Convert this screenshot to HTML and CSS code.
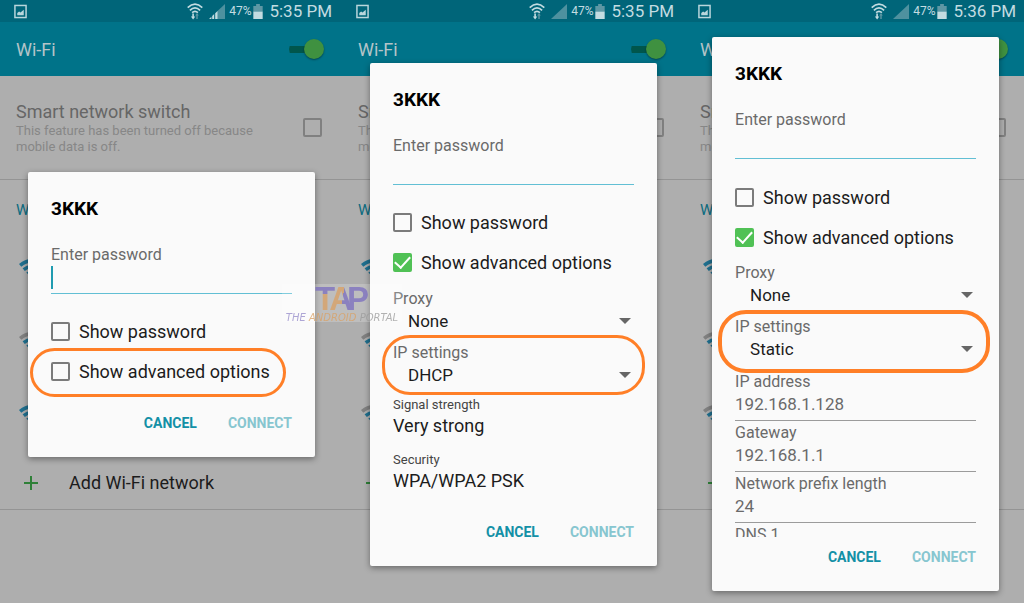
FILE: index.html
```html
<!DOCTYPE html>
<html lang="en">

<head>
    <meta charset="UTF-8">
    <meta name="viewport" content="width=device-width, initial-scale=1.0">
    <title>Wi-Fi advanced options</title>
    <link rel="stylesheet" href="styles.css">
</head>

<body>
    <!-- shared icons -->
    <svg class="defs" width="0" height="0" aria-hidden="true">
        <symbol id="i-image" viewBox="0 0 14 15">
            <rect x="1" y="1" width="12" height="13" fill="none" stroke="#b9d6dc" stroke-width="1.6" />
            <path d="M3.5 11.5V9l2-1.5L7 8.5l3.5-3v6z" fill="#b9d6dc" />
        </symbol>
        <symbol id="i-wifi-status" viewBox="0 0 16 17">
            <g fill="none" stroke="#c3dce1" stroke-width="1.7">
                <path d="M.7 4.6Q8-2.2 15.3 4.6" />
                <path d="M2.9 7.3Q8 2.3 13.1 7.3" />
                <path d="M5.1 9.7Q8 7 10.9 9.7" />
            </g>
            <path d="M5.3 10.5h1.6v3h1.4l-2.2 3-2.2-3h1.4z" fill="#c3dce1" />
            <path d="M9.3 16v-3.5H8.2L10 10l1.8 2.5h-1.1V16z" fill="#5e97a4" />
        </symbol>
        <symbol id="i-signal" viewBox="0 0 16 15">
            <path d="M0 15L16 0v15z" fill="#4e919f" />
        </symbol>
        <symbol id="i-signal-bars" viewBox="0 0 16 15">
            <path d="M8.5 7L16 0v15H8.5z" fill="#4e919f" />
            <path d="M0 15l2.4-2.2V15zM3.2 15v-3l2-1.9V15zM6.2 15V9.2L8.6 7v8z" fill="#c3dce1" />
        </symbol>
        <symbol id="i-battery" viewBox="0 0 10 16">
            <path d="M3 0h4v2h3v6H0V2h3z" fill="#5e97a4" />
            <path d="M0 8h10v8H0z" fill="#c3dce1" />
        </symbol>
        <symbol id="i-wifi" viewBox="0 0 24 18">
            <path d="M0 5Q12-5 24 5l-2.3 2.8Q12-.5 2.3 7.8z" fill="#1f6f8e" />
            <path d="M3.6 9.3Q12 2.5 20.4 9.3l-2.2 2.6Q12 7 5.8 11.9z" fill="#1f6f8e" />
            <path d="M7.3 13.5q4.7-3.7 9.4 0L12 18z" fill="#1f6f8e" />
        </symbol>
        <symbol id="i-wifi-weak" viewBox="0 0 24 18">
            <path d="M0 5Q12-5 24 5l-2.3 2.8Q12-.5 2.3 7.8z" fill="#808080" />
            <path d="M3.6 9.3Q12 2.5 20.4 9.3l-2.2 2.6Q12 7 5.8 11.9z" fill="#1f6f8e" />
            <path d="M7.3 13.5q4.7-3.7 9.4 0L12 18z" fill="#1f6f8e" />
        </symbol>
        <symbol id="i-plus" viewBox="0 0 14 14">
            <path d="M7 0v14M0 7h14" stroke="#2f8038" stroke-width="2" />
        </symbol>
    </svg>

    <main class="phones">
        <!-- default dialog -->
        <section class="phone">
            <div class="status-bar">
                <svg class="icon-image"><use href="#i-image" /></svg>
                <svg class="icon-wifi-status"><use href="#i-wifi-status" /></svg>
                <svg class="icon-signal"><use href="#i-signal-bars" /></svg>
                <span class="percent">47%</span>
                <svg class="icon-battery"><use href="#i-battery" /></svg>
                <span class="time">5:35 PM</span>
            </div>
            <header class="app-bar">
                <h1>Wi-Fi</h1>
                <input type="checkbox" class="switch" aria-label="Wi-Fi" checked>
            </header>
            <div class="smart">
                <label for="smart1">
                    <span class="smart-title">Smart network switch</span>
                    <span class="smart-text">This feature has been turned off because mobile data is off.</span>
                </label>
                <input type="checkbox" id="smart1" class="check check-dim">
            </div>
            <div class="networks">
                <h2>Wi-Fi networks</h2>
                <div class="network"><svg><use href="#i-wifi" /></svg></div>
                <div class="network"><svg><use href="#i-wifi-weak" /></svg></div>
                <div class="network"><svg><use href="#i-wifi" /></svg></div>
                <button class="add"><svg><use href="#i-plus" /></svg>Add Wi-Fi network</button>
            </div>

            <div class="overlay">
                <form class="dialog">
                    <h3>3KKK</h3>
                    <div class="dialog-body">
                        <label class="label" for="pass1">Enter password</label>
                        <div class="password focused"><input type="password" id="pass1"></div>
                        <div class="option">
                            <input type="checkbox" id="show1" class="check">
                            <label for="show1">Show password</label>
                        </div>
                        <div class="option mark mark-row">
                            <input type="checkbox" id="adv1" class="check">
                            <label for="adv1">Show advanced options</label>
                        </div>
                    </div>
                    <div class="actions">
                        <button type="button">Cancel</button>
                        <button type="button" disabled>Connect</button>
                    </div>
                </form>
            </div>
        </section>

        <!-- advanced options, DHCP -->
        <section class="phone">
            <div class="status-bar">
                <svg class="icon-image"><use href="#i-image" /></svg>
                <svg class="icon-wifi-status"><use href="#i-wifi-status" /></svg>
                <svg class="icon-signal"><use href="#i-signal" /></svg>
                <span class="percent">47%</span>
                <svg class="icon-battery"><use href="#i-battery" /></svg>
                <span class="time">5:35 PM</span>
            </div>
            <header class="app-bar">
                <h1>Wi-Fi</h1>
                <input type="checkbox" class="switch" aria-label="Wi-Fi" checked>
            </header>
            <div class="smart">
                <label for="smart2">
                    <span class="smart-title">Smart network switch</span>
                    <span class="smart-text">This feature has been turned off because mobile data is off.</span>
                </label>
                <input type="checkbox" id="smart2" class="check check-dim">
            </div>
            <div class="networks">
                <h2>Wi-Fi networks</h2>
                <div class="network"><svg><use href="#i-wifi" /></svg></div>
                <div class="network"><svg><use href="#i-wifi-weak" /></svg></div>
                <div class="network"><svg><use href="#i-wifi-weak" /></svg></div>
                <button class="add"><svg><use href="#i-plus" /></svg>Add Wi-Fi network</button>
            </div>

            <div class="overlay">
                <form class="dialog">
                    <h3>3KKK</h3>
                    <div class="dialog-body">
                        <label class="label" for="pass2">Enter password</label>
                        <div class="password"><input type="password" id="pass2"></div>
                        <div class="option">
                            <input type="checkbox" id="show2" class="check">
                            <label for="show2">Show password</label>
                        </div>
                        <div class="option">
                            <input type="checkbox" id="adv2" class="check" checked>
                            <label for="adv2">Show advanced options</label>
                        </div>
                        <div class="field">
                            <label class="label" for="proxy2">Proxy</label>
                            <div class="select"><select id="proxy2"><option>None</option></select></div>
                        </div>
                        <div class="field mark mark-dhcp">
                            <label class="label" for="ip2">IP settings</label>
                            <div class="select"><select id="ip2"><option>DHCP</option><option>Static</option></select></div>
                        </div>
                        <dl class="info">
                            <dt>Signal strength</dt>
                            <dd>Very strong</dd>
                            <dt>Security</dt>
                            <dd>WPA/WPA2 PSK</dd>
                        </dl>
                    </div>
                    <div class="actions">
                        <button type="button">Cancel</button>
                        <button type="button" disabled>Connect</button>
                    </div>
                </form>
            </div>
        </section>

        <!-- advanced options, static IP -->
        <section class="phone">
            <div class="status-bar">
                <svg class="icon-image"><use href="#i-image" /></svg>
                <svg class="icon-wifi-status"><use href="#i-wifi-status" /></svg>
                <svg class="icon-signal"><use href="#i-signal" /></svg>
                <span class="percent">47%</span>
                <svg class="icon-battery"><use href="#i-battery" /></svg>
                <span class="time">5:36 PM</span>
            </div>
            <header class="app-bar">
                <h1>Wi-Fi</h1>
                <input type="checkbox" class="switch" aria-label="Wi-Fi" checked>
            </header>
            <div class="smart">
                <label for="smart3">
                    <span class="smart-title">Smart network switch</span>
                    <span class="smart-text">This feature has been turned off because mobile data is off.</span>
                </label>
                <input type="checkbox" id="smart3" class="check check-dim">
            </div>
            <div class="networks">
                <h2>Wi-Fi networks</h2>
                <div class="network"><svg><use href="#i-wifi" /></svg></div>
                <div class="network"><svg><use href="#i-wifi-weak" /></svg></div>
                <div class="network"><svg><use href="#i-wifi-weak" /></svg></div>
                <button class="add"><svg><use href="#i-plus" /></svg>Add Wi-Fi network</button>
            </div>

            <div class="overlay">
                <form class="dialog">
                    <h3>3KKK</h3>
                    <div class="dialog-body">
                        <label class="label" for="pass3">Enter password</label>
                        <div class="password"><input type="password" id="pass3"></div>
                        <div class="option">
                            <input type="checkbox" id="show3" class="check">
                            <label for="show3">Show password</label>
                        </div>
                        <div class="option">
                            <input type="checkbox" id="adv3" class="check" checked>
                            <label for="adv3">Show advanced options</label>
                        </div>
                        <div class="field">
                            <label class="label" for="proxy3">Proxy</label>
                            <div class="select"><select id="proxy3"><option>None</option></select></div>
                        </div>
                        <div class="field mark mark-static">
                            <label class="label" for="ip3">IP settings</label>
                            <div class="select"><select id="ip3"><option>Static</option><option>DHCP</option></select></div>
                        </div>
                        <div class="static">
                            <label class="label" for="address">IP address</label>
                            <input type="text" id="address" value="192.168.1.128">
                            <label class="label" for="gateway">Gateway</label>
                            <input type="text" id="gateway" value="192.168.1.1">
                            <label class="label" for="prefix">Network prefix length</label>
                            <input type="text" id="prefix" value="24">
                            <label class="label" for="dns">DNS 1</label>
                            <input type="text" id="dns">
                        </div>
                    </div>
                    <div class="actions">
                        <button type="button">Cancel</button>
                        <button type="button" disabled>Connect</button>
                    </div>
                </form>
            </div>
        </section>
    </main>

    <div class="watermark">
        <div class="logo"><span class="t">T</span><span class="a">A</span><span class="p">P</span></div>
        <div class="tagline">THE <span class="android">ANDROID</span> <span class="portal">PORTAL</span></div>
    </div>
</body>

</html>
```

FILE: styles.css
```css
* {
    box-sizing: border-box;
}

body {
    margin: 0;
    overflow: hidden;
    background: #aeaeae;
    color: #1c1c1c;
    font-family: Roboto, "Liberation Sans", sans-serif;
    font-size: 18px;
}

h1,
h2,
h3,
dl,
dd {
    margin: 0;
    font-weight: 400;
}

input,
select,
button {
    margin: 0;
    padding: 0;
    border: none;
    border-radius: 0;
    background: none;
    color: inherit;
    font: inherit;
    outline: none;
    appearance: none;
}

svg {
    display: block;
    flex: none;
}

.defs {
    position: absolute;
}

.phones {
    display: grid;
    grid-template-columns: repeat(3, 33.4%);
    height: 100vh;
}

.phone {
    position: relative;
    overflow: hidden;
    background: #aeaeae;
}

/* status bar */
.status-bar {
    display: flex;
    align-items: center;
    height: 22px;
    padding: 0 10px 0 14px;
    background: #006579;
    color: #c3dce1;
}

.icon-image {
    width: 13px;
    height: 15px;
    margin-right: auto;
}

.icon-wifi-status {
    width: 16px;
    height: 17px;
}

.icon-signal {
    width: 16px;
    height: 15px;
    margin: 0 4px 0 6px;
}

.percent {
    font-size: 12px;
}

.icon-battery {
    width: 10px;
    height: 15px;
    margin: 0 6px 0 2px;
}

.time {
    font-size: 17px;
}

/* page under the dialog */
.app-bar {
    display: flex;
    align-items: center;
    justify-content: space-between;
    height: 54px;
    padding: 0 18px 0 16px;
    background: #007389;
    color: #b4c4c8;
}

.app-bar h1 {
    font-size: 18px;
}

.switch {
    display: flex;
    align-items: center;
    justify-content: flex-end;
    width: 35px;
    height: 20px;
    background: linear-gradient(#00564c, #00564c) 0 50% / 26px 7px no-repeat;
    border-radius: 10px;
}

.switch::after {
    content: "";
    width: 20px;
    height: 20px;
    border-radius: 50%;
    background: #3f9140;
    box-shadow: 0 1px 2px rgba(0, 0, 0, 0.4);
}

.smart {
    display: flex;
    align-items: center;
    justify-content: space-between;
    height: 104px;
    padding: 0 20px 0 16px;
    border-bottom: 1px solid #949494;
}

.smart label {
    width: 250px;
}

.smart-title {
    display: block;
    color: #666;
    line-height: 22px;
}

.smart-text {
    display: block;
    color: #878787;
    font-size: 13px;
    line-height: 16px;
}

.networks {
    border-bottom: 1px solid #949494;
}

.networks h2 {
    height: 51px;
    padding: 20px 16px 0;
    color: #0b6b80;
    font-size: 15px;
    line-height: 20px;
}

.network {
    display: flex;
    align-items: center;
    height: 73px;
    padding-left: 19px;
}

.network svg {
    width: 24px;
    height: 18px;
}

.add {
    display: flex;
    align-items: center;
    gap: 31px;
    width: 100%;
    height: 59px;
    padding: 6px 0 0 24px;
}

.add svg {
    width: 14px;
    height: 14px;
}

/* dialog */
.overlay {
    position: absolute;
    inset: 25px 0 0;
    display: flex;
    flex-direction: column;
    justify-content: center;
    padding: 12px 27px 12px 28px;
}

.dialog {
    display: flex;
    flex-direction: column;
    min-height: 0;
    border-radius: 2px;
    background: #fafafa;
    box-shadow: 0 2px 6px rgba(0, 0, 0, 0.4);
}

.dialog h3 {
    padding: 25px 23px 0;
    color: #000;
    font-size: 19px;
    font-weight: 700;
    line-height: 24px;
}

.dialog-body {
    min-height: 0;
    padding: 23px 23px 11px;
    overflow: hidden;
}

.label {
    display: block;
    color: #6a6a6a;
    font-size: 16px;
    line-height: 22px;
}

.password {
    position: relative;
    margin-bottom: 18px;
}

.password input {
    display: block;
    width: 100%;
    height: 28px;
    border-bottom: 1px solid #62bfd4;
}

.focused::before {
    content: "";
    position: absolute;
    top: 0;
    left: 0;
    width: 2px;
    height: 23px;
    background: #1f9bb0;
}

.option {
    display: flex;
    align-items: center;
    gap: 9px;
    height: 40px;
}

.check {
    display: grid;
    place-items: center;
    width: 19px;
    height: 19px;
    border: 2px solid #7b7b7b;
    border-radius: 2px;
}

.check-dim {
    border-color: #808080;
}

.check:checked {
    border-color: #50c155;
    background: #50c155;
}

.check:checked::after {
    content: "";
    width: 7px;
    height: 13px;
    border: solid #fff;
    border-width: 0 2px 2px 0;
    transform: translateY(-2px) rotate(42deg);
}

.field {
    padding: 5px 0;
}

.select {
    display: flex;
    align-items: center;
    padding: 0 3px 0 15px;
}

.select select {
    flex: 1;
    height: 22px;
    font-size: 17px;
}

.select::after {
    content: "";
    border: 6px solid transparent;
    border-top-color: #666;
    border-bottom: none;
}

.info dt {
    padding-top: 4px;
    color: #444;
    font-size: 13px;
    line-height: 20px;
}

.info dd {
    padding-bottom: 9px;
    line-height: 22px;
}

.static {
    padding-top: 6px;
}

.static input {
    display: block;
    width: 100%;
    height: 28px;
    margin-bottom: 1px;
    padding-bottom: 5px;
    border-bottom: 1px solid #9b9b9b;
    color: #6a6a6a;
    font-size: 17px;
}

.actions {
    display: flex;
    flex: none;
    justify-content: flex-end;
    gap: 31px;
    padding: 0 23px 14px;
}

.actions button {
    height: 40px;
    color: #1390a6;
    font-size: 14px;
    font-weight: 700;
    text-transform: uppercase;
}

.actions button:disabled {
    color: #87c6d0;
}

/* orange rings */
.mark {
    position: relative;
}

.mark::before {
    content: "";
    position: absolute;
    border: 3px solid #ff7f27;
    pointer-events: none;
}

.mark-row::before {
    inset: -4px 6px -5px -21px;
    border-radius: 25px;
}

.mark-dhcp::before {
    inset: -2px -11px -4px;
    border-radius: 28px;
}

.mark-static::before {
    inset: -1px -14px -8px -17px;
    border-width: 4px;
    border-radius: 28px;
}

/* watermark */
.watermark {
    position: absolute;
    top: 284px;
    left: 282px;
    width: 120px;
    height: 38px;
    background: rgba(255, 255, 255, 0.25);
    text-align: center;
    white-space: nowrap;
    opacity: 0.8;
}

.logo {
    display: flex;
    justify-content: center;
    font: 700 33px/30px "Liberation Sans", sans-serif;
}

.logo span {
    background: #8377c4;
    background-clip: text;
    color: transparent;
}

.logo .t {
    background-image: linear-gradient(#8377c4 34%, #dda66c 34%);
}

.logo .a {
    margin: 0 -6px;
    background-image: linear-gradient(100deg, #dda66c 55%, #8377c4 55%);
}

.tagline {
    color: #9a90cc;
    font: italic 10px/7px "DejaVu Sans", sans-serif;
}

.tagline .android {
    color: #dda66c;
}

.tagline .portal {
    color: #a0a0a0;
}
```
